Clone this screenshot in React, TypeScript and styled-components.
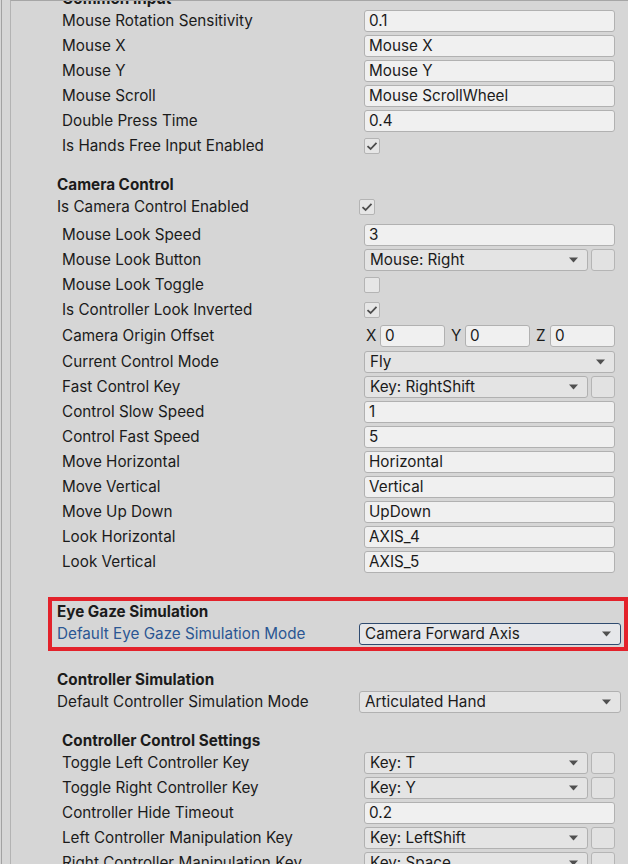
import React from 'react';
import styled, { createGlobalStyle } from 'styled-components';

const FONT_SIZE = '15.25px';

const Global = createGlobalStyle`
  html, body {
    margin: 0;
    padding: 0;
    background: #d6d6d6;
  }
  body {
    font-family: Inter, "Noto Sans", sans-serif;
    color: #1b1b1b;
    overflow: hidden;
  }
`;

const Frame = styled.div`
  height: 864px;
  overflow: hidden;
  margin-left: 1px;
  border-left: 1px solid #a2a2a2;
  box-sizing: border-box;
`;

const Pane = styled.div`
  height: 100%;
  margin-left: 8px;
  border-left: 1px solid #b3b3b3;
  border-top: 1px solid #a6a6a6;
  box-sizing: border-box;
  overflow: hidden;
`;

const Inspector = styled.div`
  display: flex;
  flex-direction: column;
  margin-top: -13px;
  padding: 0 7px 0 46px;
`;

const Group = styled.div<{ $gap?: number }>`
  display: flex;
  flex-direction: column;
  padding: 0 6px 0 5px;
  margin-top: ${(p) => p.$gap ?? 0}px;
`;

const Section = styled.div<{ $gap?: number }>`
  display: flex;
  flex-direction: column;
  margin-top: ${(p) => p.$gap ?? 0}px;
`;

const Highlight = styled.div<{ $gap?: number }>`
  display: flex;
  flex-direction: column;
  margin: ${(p) => p.$gap ?? 0}px -7px 0 -9px;
  border: 4px solid #e3222b;
  padding: 0 3px 1px 5px;
`;

const Header = styled.div`
  height: 20px;
  display: flex;
  align-items: center;
  font-size: ${FONT_SIZE};
  font-weight: 700;
  white-space: nowrap;
`;

const Row = styled.div<{ $h?: number }>`
  display: grid;
  grid-template-columns: 302px 1fr;
  align-items: center;
  height: ${(p) => p.$h ?? 25}px;
`;

const Label = styled.div<{ $focus?: boolean }>`
  font-size: ${FONT_SIZE};
  white-space: nowrap;
  color: ${(p) => (p.$focus ? '#2b5693' : '#1b1b1b')};
`;

const TextField = styled.div`
  height: 22px;
  box-sizing: border-box;
  border: 1px solid #b1b1b1;
  border-radius: 3px;
  background: #f0f0f0;
  padding: 0 4px;
  display: flex;
  align-items: center;
  font-size: ${FONT_SIZE};
  white-space: nowrap;
  overflow: hidden;
  min-width: 0;
`;

const Select = styled.div<{ $focus?: boolean }>`
  height: 22px;
  box-sizing: border-box;
  border: 1px solid ${(p) => (p.$focus ? '#2f4b70' : '#b1b1b1')};
  border-radius: 3px;
  background: ${(p) => (p.$focus ? '#e6e7ea' : '#e4e4e4')};
  padding: 0 9px 0 5px;
  display: flex;
  align-items: center;
  justify-content: space-between;
  font-size: ${FONT_SIZE};
  white-space: nowrap;
  min-width: 0;
`;

const KeyPair = styled.div`
  display: grid;
  grid-template-columns: 1fr 24px;
  gap: 3px;
`;

const PickButton = styled.div`
  height: 22px;
  box-sizing: border-box;
  border: 1px solid #b5b5b5;
  border-radius: 3px;
  background: #e2e2e2;
`;

const CheckBox = styled.div`
  width: 16px;
  height: 16px;
  box-sizing: border-box;
  border: 1px solid #b4b4b4;
  border-radius: 2px;
  background: #e6e6e6;
  display: flex;
  align-items: center;
  justify-content: center;
`;

const Vector = styled.div`
  display: grid;
  grid-template-columns: repeat(3, 1fr);
  gap: 4px;
`;

const Axis = styled.div`
  display: grid;
  grid-template-columns: 16px 1fr;
  align-items: center;
  font-size: ${FONT_SIZE};
`;

const AxisName = styled.span`
  padding-left: 2px;
`;

const Arrow = () => (
  <svg width="9" height="6" viewBox="0 0 9 6">
    <path d="M0 0.5 H9 L4.5 5.5 Z" fill="#505050" />
  </svg>
);

const Tick = () => (
  <svg width="12" height="10" viewBox="0 0 12 10">
    <path d="M1.5 5.2 L4.6 8 L10.5 1.8" fill="none" stroke="#4d4d4d" strokeWidth="1.8" />
  </svg>
);

type FieldProps = { label: string; value: string };

const TextRow = ({ label, value }: FieldProps) => (
  <Row>
    <Label>{label}</Label>
    <TextField>{value}</TextField>
  </Row>
);

const SelectRow = ({ label, value, focus }: FieldProps & { focus?: boolean }) => (
  <Row>
    <Label $focus={focus}>{label}</Label>
    <Select $focus={focus}>
      <span>{value}</span>
      <Arrow />
    </Select>
  </Row>
);

const KeyRow = ({ label, value }: FieldProps) => (
  <Row>
    <Label>{label}</Label>
    <KeyPair>
      <Select>
        <span>{value}</span>
        <Arrow />
      </Select>
      <PickButton />
    </KeyPair>
  </Row>
);

const ToggleRow = ({ label, checked }: { label: string; checked: boolean }) => (
  <Row>
    <Label>{label}</Label>
    <CheckBox>{checked && <Tick />}</CheckBox>
  </Row>
);

const VectorRow = ({ label, values }: { label: string; values: string[] }) => (
  <Row $h={27}>
    <Label>{label}</Label>
    <Vector>
      {['X', 'Y', 'Z'].map((axis, i) => (
        <Axis key={axis}>
          <AxisName>{axis}</AxisName>
          <TextField>{values[i]}</TextField>
        </Axis>
      ))}
    </Vector>
  </Row>
);

export default function App() {
  return (
    <>
      <Global />
      <Frame>
        <Pane>
          <Inspector>
            <Group>
              <Header>Common Input</Header>
              <TextRow label="Mouse Rotation Sensitivity" value="0.1" />
              <TextRow label="Mouse X" value="Mouse X" />
              <TextRow label="Mouse Y" value="Mouse Y" />
              <TextRow label="Mouse Scroll" value="Mouse ScrollWheel" />
              <TextRow label="Double Press Time" value="0.4" />
              <ToggleRow label="Is Hands Free Input Enabled" checked />
            </Group>

            <Section $gap={16}>
              <Header>Camera Control</Header>
              <ToggleRow label="Is Camera Control Enabled" checked />
              <Group $gap={3}>
                <TextRow label="Mouse Look Speed" value="3" />
                <KeyRow label="Mouse Look Button" value="Mouse: Right" />
                <ToggleRow label="Mouse Look Toggle" checked={false} />
                <ToggleRow label="Is Controller Look Inverted" checked />
                <VectorRow label="Camera Origin Offset" values={['0', '0', '0']} />
                <SelectRow label="Current Control Mode" value="Fly" />
                <KeyRow label="Fast Control Key" value="Key: RightShift" />
                <TextRow label="Control Slow Speed" value="1" />
                <TextRow label="Control Fast Speed" value="5" />
                <TextRow label="Move Horizontal" value="Horizontal" />
                <TextRow label="Move Vertical" value="Vertical" />
                <TextRow label="Move Up Down" value="UpDown" />
                <TextRow label="Look Horizontal" value="AXIS_4" />
                <TextRow label="Look Vertical" value="AXIS_5" />
              </Group>
            </Section>

            <Highlight $gap={23}>
              <Header>Eye Gaze Simulation</Header>
              <SelectRow label="Default Eye Gaze Simulation Mode" value="Camera Forward Axis" focus />
            </Highlight>

            <Section $gap={18}>
              <Header>Controller Simulation</Header>
              <SelectRow label="Default Controller Simulation Mode" value="Articulated Hand" />
            </Section>

            <Group $gap={16}>
              <Header>Controller Control Settings</Header>
              <KeyRow label="Toggle Left Controller Key" value="Key: T" />
              <KeyRow label="Toggle Right Controller Key" value="Key: Y" />
              <TextRow label="Controller Hide Timeout" value="0.2" />
              <KeyRow label="Left Controller Manipulation Key" value="Key: LeftShift" />
              <KeyRow label="Right Controller Manipulation Key" value="Key: Space" />
            </Group>
          </Inspector>
        </Pane>
      </Frame>
    </>
  );
}
